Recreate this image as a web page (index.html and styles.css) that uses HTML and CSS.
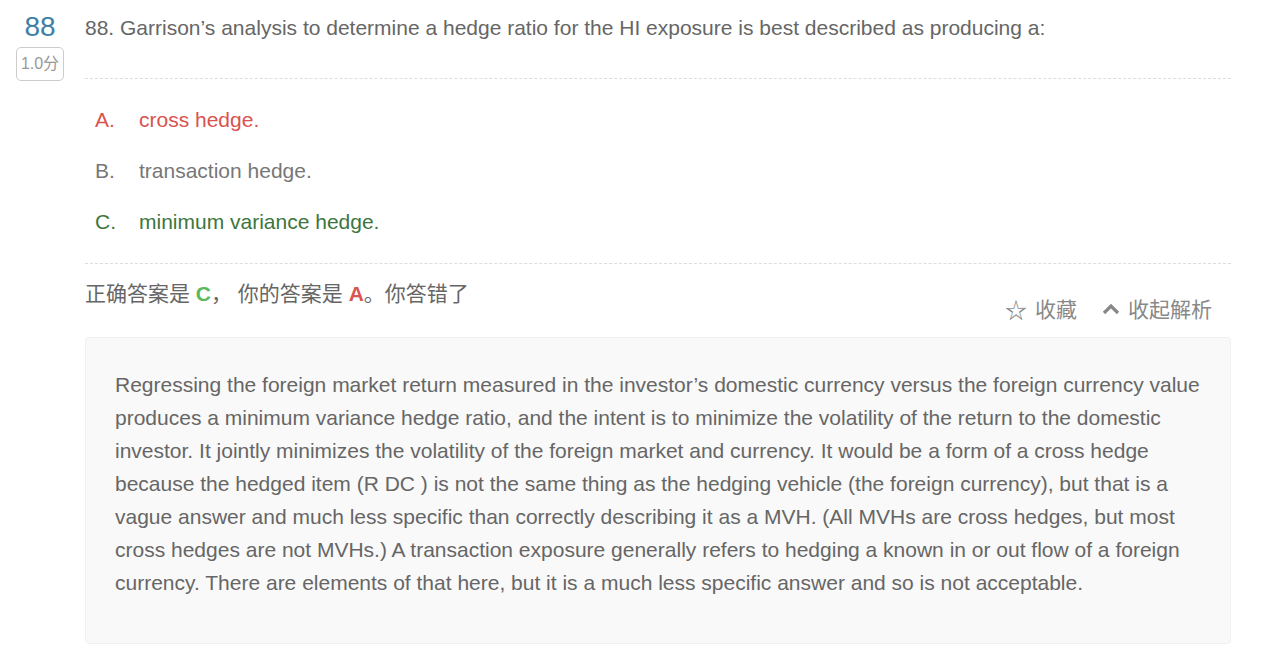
FILE: index.html
```html
<!DOCTYPE html>
<html>
<head>
<meta charset="utf-8">
<link rel="stylesheet" href="styles.css">
</head>
<body>
<div class="page">
  <div class="side">
    <div class="num">88</div>
    <div class="score">1.0分</div>
  </div>
  <div class="main">
    <div class="question">88. Garrison’s analysis to determine a hedge ratio for the HI exposure is best described as producing a:</div>
    <div class="options">
      <div class="opt wrong"><span class="letter">A.</span><span>cross hedge.</span></div>
      <div class="opt"><span class="letter">B.</span><span>transaction hedge.</span></div>
      <div class="opt right"><span class="letter">C.</span><span>minimum variance hedge.</span></div>
    </div>
    <div class="result">
      <div class="answer">正确答案是 <b class="g">C</b>， 你的答案是 <b class="r">A</b>。你答错了</div>
      <div class="actions">
        <span class="act"><span class="star">☆</span>收藏</span>
        <span class="act"><svg class="chev" width="18" height="12" viewBox="0 0 18 12"><path d="M2 10 L9 3 L16 10" fill="none" stroke="#888" stroke-width="3.2" stroke-linejoin="miter"/></svg>收起解析</span>
      </div>
    </div>
    <div class="explain">Regressing the foreign market return measured in the investor’s domestic currency versus the foreign currency value produces a minimum variance hedge ratio, and the intent is to minimize the volatility of the return to the domestic investor. It jointly minimizes the volatility of the foreign market and currency. It would be a form of a cross hedge because the hedged item (R DC ) is not the same thing as the hedging vehicle (the foreign currency), but that is a vague answer and much less specific than correctly describing it as a MVH. (All MVHs are cross hedges, but most cross hedges are not MVHs.) A transaction exposure generally refers to hedging a known in or out flow of a foreign currency. There are elements of that here, but it is a much less specific answer and so is not acceptable.</div>
  </div>
</div>
</body>
</html>
```
FILE: styles.css
```css
html, body { margin: 0; padding: 0; background: #fff; }
body { font-family: "Liberation Sans", Arial, "Noto Sans CJK SC", sans-serif; color: #666; }
.page { display: flex; padding: 10px 38px 0 16px; }
.side { width: 48px; display: flex; flex-direction: column; align-items: center; margin-right: 21px; }
.num { font-size: 28px; color: #3d7ea6; line-height: 34px; }
.score { margin-top: 3px; border: 1px solid #ccc; border-radius: 5px; font-size: 16px; color: #999; width: 46px; height: 32px; line-height: 32px; text-align: center; font-family: "Liberation Sans", "Noto Sans CJK SC", sans-serif; }
.main { flex: 1; }
.question { font-size: 21px; color: #666; line-height: 36px; padding-bottom: 32px; border-bottom: 1px dashed #ddd; }
.options { padding: 15px 0 16px 10px; border-bottom: 1px dashed #ddd; }
.opt { font-size: 21px; line-height: 51px; color: #777; display: flex; }
.letter { width: 44px; }
.opt.wrong { color: #d9534f; }
.opt.right { color: #3c763d; }
.result { display: flex; justify-content: space-between; align-items: flex-start; padding-top: 15px; height: 58px; }
.answer { font-size: 21px; line-height: 30px; color: #666; font-family: "Liberation Sans", "Noto Sans CJK SC", sans-serif; }
.g { color: #5cb85c; }
.r { color: #d9534f; }
.actions { display: flex; gap: 25px; margin-top: 15px; margin-right: 19px; font-size: 21px; color: #888; font-family: "Noto Sans CJK SC", sans-serif; line-height: 28px; }
.act { display: flex; align-items: center; gap: 8px; }
.star { font-size: 22px; }
.chev { margin-top: 1px; }
.explain { background: #f9f9f9; border: 1px solid #f0f0f0; border-radius: 4px; padding: 30px 26px 44px 29px; font-size: 21px; line-height: 33px; color: #666; }
```
